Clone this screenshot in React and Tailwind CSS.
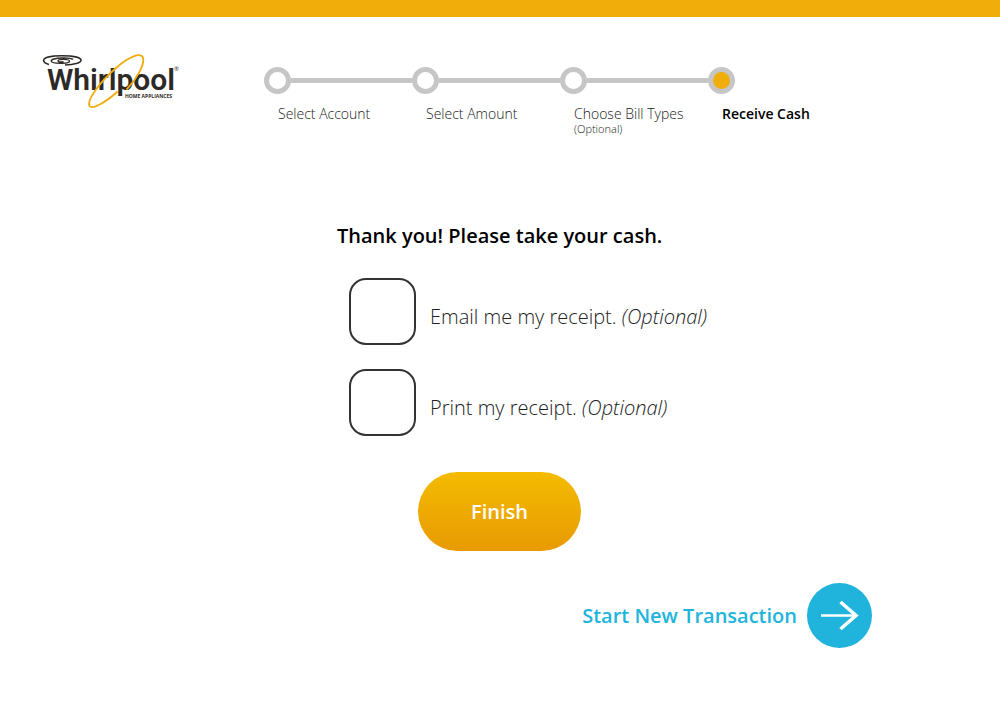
const steps = [
  { label: 'Select Account' },
  { label: 'Select Amount' },
  { label: 'Choose Bill Types', note: '(Optional)' },
  { label: 'Receive Cash', current: true },
];

const receipts = [
  { id: 'email-receipt', label: 'Email me my receipt.' },
  { id: 'print-receipt', label: 'Print my receipt.' },
];

function Logo() {
  return (
    <svg
      viewBox="0 0 138 58"
      className="mt-[35px] h-[58px] w-[138px] shrink-0"
      role="img"
      aria-label="Whirlpool Home Appliances"
    >
      <g fill="none" stroke="#2d2926">
        <path d="M7 12.400C2.500 11.200 1.600 9.600 1.600 8.200 1.800 5.600 9 3.800 20 3.800s19 1.800 19 4.400c0 2.500-7 4.600-16 4.800" strokeWidth="1.600" />
        <path d="M31 7.600C29.500 6.200 25 5.800 20 6c-6.500 .2-11 1.400-10.800 3C9.400 10.600 14 11.400 20 11.300c4.500-.1 7.500-.9 7.500-2.100S24.500 7.400 21.500 7.400s-5.500 .6-5.500 1.500 3 1.300 5.500 .8" strokeWidth="1.400" />
      </g>
      <text x="5" y="38" fill="#2d2926" className="font-['Roboto',sans-serif] text-[30px] font-semibold">
        Whirlpool
      </text>
      <text x="83" y="46" fill="#2d2926" className="font-['Open_Sans',sans-serif] text-[5px] font-bold">
        HOME APPLIANCES
      </text>
      <text x="132" y="19" fill="#2d2926" className="font-['Open_Sans',sans-serif] text-[6px]">
        ®
      </text>
      <path
        d="M85 37C95 27 103 12 101 5.500 98.500 0 86 5 74 16 58 30 44.500 48 47.500 54 50 57.500 63 51 75 40"
        fill="none"
        stroke="#f0ac0a"
        strokeWidth="1.800"
        strokeLinecap="round"
      />
    </svg>
  );
}

function Progress() {
  return (
    <ol className="mt-[50px] flex">
      {steps.map(({ label, note, current }, i) => (
        <li key={label} className="w-[148px]" aria-current={current ? 'step' : undefined}>
          <div className="flex items-center">
            <span
              className={`size-[27px] shrink-0 rounded-full border-5 border-[#c6c6c6] ${current ? 'bg-[#f1ad0a]' : 'bg-white'}`}
            />
            {i < steps.length - 1 && <span className="h-[5px] flex-1 bg-[#c6c6c6]" />}
          </div>
          <div className="mt-3 pl-[14px] whitespace-nowrap">
            <p className={`text-[14px] leading-4 ${current ? 'font-semibold text-black' : 'font-light text-[#222]'}`}>
              {label}
            </p>
            {note && <p className="text-[11px] leading-[13px] font-light text-[#222]">{note}</p>}
          </div>
        </li>
      ))}
    </ol>
  );
}

export default function App() {
  return (
    <div className="min-h-screen border-t-17 border-[#f1ad0a] bg-white font-['Open_Sans',sans-serif]">
      <header className="flex items-start gap-[84px] pl-[42px]">
        <Logo />
        <Progress />
      </header>

      <main className="mx-auto mt-[87px] w-full max-w-[744px] pb-16">
        <h1 className="pl-[209px] text-[20px] leading-7 font-semibold text-black">
          Thank you! Please take your cash.
        </h1>

        <div className="mt-7 flex flex-col gap-6 pl-[221px]">
          {receipts.map(({ id, label }) => (
            <div key={id} className="flex items-center gap-[14px]">
              <input
                id={id}
                type="checkbox"
                className="size-[67px] shrink-0 appearance-none rounded-[17px] border-2 border-[#333] bg-white checked:bg-[#f1ad0a]"
              />
              <label htmlFor={id} className="pt-[10px] text-[20px] leading-7 font-light text-[#222]">
                {label} <em>(Optional)</em>
              </label>
            </div>
          ))}
        </div>

        <button
          type="button"
          className="mt-9 ml-[290px] block h-[79px] w-[163px] rounded-full bg-linear-to-b from-[#f3bb00] to-[#e89a03] text-[20px] font-semibold text-white"
        >
          Finish
        </button>

        <div className="mt-8 flex justify-end">
          <a href="#start" className="flex items-center gap-[10px] text-[20px] font-semibold text-[#20b4dd]">
            Start New Transaction
            <svg viewBox="0 0 65 65" className="size-[65px]" fill="none" aria-hidden="true">
              <circle cx="32.500" cy="32.500" r="32.500" fill="#20b4dd" />
              <path d="M14 32.500h34" stroke="#fff" strokeWidth="2.500" />
              <path d="M33.500 19l15.500 13.500L33.500 46" stroke="#fff" strokeWidth="3.500" />
            </svg>
          </a>
        </div>
      </main>
    </div>
  );
}
